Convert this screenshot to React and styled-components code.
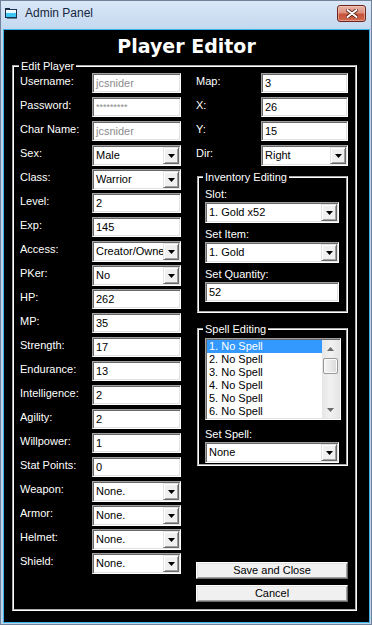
import React from "react";
import styled, { createGlobalStyle } from "styled-components";

const Global = createGlobalStyle`
  html, body { margin: 0; padding: 0; background: #ffffff; }
  body { font-family: "Liberation Sans", Arial, sans-serif; }
  * { box-sizing: border-box; }
`;

const Window = styled.div`
  width: 372px;
  height: 625px;
  display: flex;
  flex-direction: column;
  border: 1px solid #71839a;
  background: linear-gradient(to bottom, #dae7f6 0px, #c3d8ef 28px, #bcd3eb 60px, #bcd3eb 100%);
`;

const TitleBar = styled.div`
  height: 28px;
  display: flex;
  align-items: flex-start;
  padding: 4px 5px 0 4px;
`;

const TitleIcon = styled.svg`
  margin-top: 3px;
  flex: none;
`;

const TitleText = styled.div`
  margin: 1px 0 0 8px;
  font-family: "Liberation Sans", Arial, sans-serif;
  font-size: 12px;
  line-height: 14px;
  color: #15273f;
`;

const CloseButton = styled.div`
  margin-left: auto;
  width: 29px;
  height: 17px;
  border: 1px solid #6e2419;
  border-radius: 3px;
  background: linear-gradient(to bottom, #eab5a7 0%, #dc8f7c 45%, #c6523b 55%, #d0694f 100%);
  box-shadow: inset 0 0 0 1px rgba(255, 220, 210, 0.45);
  display: flex;
  align-items: center;
  justify-content: center;
`;

const Client = styled.div`
  flex: 1;
  margin: 0 1px 1px 2px;
  border: 1px solid #3db2ea;
  background: #000;
  display: flex;
  flex-direction: column;
  padding-top: 5px;
`;

const Heading = styled.div`
  font-family: "DejaVu Sans", Verdana, sans-serif;
  font-weight: bold;
  font-size: 19px;
  line-height: 22px;
  color: #fff;
  text-align: center;
`;

const GroupBox = styled.fieldset`
  border: 2px groove #ffffff;
  margin: ${(p) => p.$margin};
  padding: 0;
  min-width: 0;
`;

const Legend = styled.legend`
  color: #fff;
  font-size: 11px;
  line-height: 14px;
  padding: 0 2px;
  margin-left: ${(p) => p.$indent}px;
`;

const EditorBody = styled.div`
  display: grid;
  grid-template-columns: 161px 152px;
  column-gap: 15px;
  align-items: start;
  padding: 0 6px 7px 6px;
`;

const Column = styled.div`
  display: flex;
  flex-direction: column;
`;

const Row = styled.div`
  display: grid;
  grid-template-columns: ${(p) => p.$label}px ${(p) => p.$field}px;
  height: 24px;
  align-items: start;
`;

const Label = styled.div`
  color: #fff;
  font-size: 11px;
  line-height: 13px;
  padding-top: 2px;
  white-space: nowrap;
`;

const StackLabel = styled.div`
  color: #fff;
  font-size: 11px;
  line-height: 13px;
  margin-top: ${(p) => p.$mt || 0}px;
  white-space: nowrap;
`;

const sunken = `
  border: 1px solid;
  border-color: #a0a0a0 #ffffff #ffffff #a0a0a0;
  box-shadow: inset 1px 1px 0 #696969, inset -1px -1px 0 #e3e3e3;
  background: #fff;
`;

const TextBox = styled.div`
  ${sunken}
  height: 20px;
  width: ${(p) => (p.$w ? `${p.$w}px` : "auto")};
  margin-top: ${(p) => p.$mt || 0}px;
  padding: 0 3px;
  font-size: ${(p) => (p.$secret ? "9px" : "11px")};
  line-height: 18px;
  color: ${(p) => (p.$disabled ? "#8c8c8c" : "#000")};
  white-space: nowrap;
  overflow: hidden;
`;

const Combo = styled.div`
  ${sunken}
  height: 21px;
  width: ${(p) => (p.$w ? `${p.$w}px` : "auto")};
  margin-top: ${(p) => p.$mt || 0}px;
  padding: 1px;
  display: flex;
`;

const ComboText = styled.div`
  flex: 1;
  min-width: 0;
  padding-left: 2px;
  font-size: 11px;
  line-height: 17px;
  color: #000;
  white-space: nowrap;
  overflow: hidden;
`;

const DropButton = styled.div`
  flex: none;
  width: 16px;
  height: 17px;
  background: #f0f0f0;
  border: 1px solid;
  border-color: #e3e3e3 #696969 #696969 #e3e3e3;
  box-shadow: inset 1px 1px 0 #ffffff, inset -1px -1px 0 #a0a0a0;
  display: flex;
  align-items: center;
  justify-content: center;
`;

const SubBody = styled.div`
  display: flex;
  flex-direction: column;
  padding: ${(p) => p.$pad};
`;

const ListBox = styled.div`
  ${sunken}
  width: 136px;
  height: 82px;
  padding: 1px;
  display: flex;
`;

const ListItems = styled.div`
  flex: 1;
  min-width: 0;
  display: flex;
  flex-direction: column;
`;

const ListItem = styled.div`
  height: 13px;
  font-size: 11px;
  line-height: 13px;
  padding-left: 2px;
  white-space: nowrap;
  color: ${(p) => (p.$selected ? "#fff" : "#000")};
  background: ${(p) => (p.$selected ? "#3399ff" : "transparent")};
`;

const ScrollBar = styled.div`
  flex: none;
  width: 17px;
  background: linear-gradient(to right, #e6e6e6, #f1f1f1 50%, #e6e6e6);
  display: flex;
  flex-direction: column;
`;

const ScrollArrow = styled.div`
  height: 17px;
  display: flex;
  align-items: center;
  justify-content: center;
`;

const ScrollTrack = styled.div`
  flex: 1;
  display: flex;
  flex-direction: column;
  align-items: center;
`;

const ScrollThumb = styled.div`
  margin-top: 1px;
  width: 15px;
  height: 16px;
  border: 1px solid #979797;
  border-radius: 2px;
  background: linear-gradient(to right, #f4f4f4, #e8e8e8 50%, #d9d9d9);
  box-shadow: inset 0 0 0 1px #fbfbfb;
`;

const PushButton = styled.div`
  height: 17px;
  margin-top: ${(p) => p.$mt}px;
  border: 1px solid;
  border-color: #ffffff #696969 #696969 #ffffff;
  box-shadow: inset 1px 1px 0 #e3e3e3, inset -1px -1px 0 #a0a0a0;
  background: #f0f0f0;
  font-size: 11px;
  line-height: 15px;
  text-align: center;
  color: #000;
`;

const Arrow = () => (
  <svg width="7" height="4" viewBox="0 0 7 4">
    <polygon points="0,0 7,0 3.5,4" fill="#000" />
  </svg>
);

const ScrollGlyph = ({ up }) => (
  <svg width="7" height="4" viewBox="0 0 7 4">
    <polygon points={up ? "0,4 7,4 3.5,0" : "0,0 7,0 3.5,4"} fill="#6a6a6a" />
  </svg>
);

const ComboField = ({ value, w, mt }) => (
  <Combo $w={w} $mt={mt}>
    <ComboText>{value}</ComboText>
    <DropButton>
      <Arrow />
    </DropButton>
  </Combo>
);

const leftRows = [
  ["Username:", "text", "jcsnider", true],
  ["Password:", "secret", "*********", true],
  ["Char Name:", "text", "jcsnider", true],
  ["Sex:", "combo", "Male"],
  ["Class:", "combo", "Warrior"],
  ["Level:", "text", "2"],
  ["Exp:", "text", "145"],
  ["Access:", "combo", "Creator/Owner"],
  ["PKer:", "combo", "No"],
  ["HP:", "text", "262"],
  ["MP:", "text", "35"],
  ["Strength:", "text", "17"],
  ["Endurance:", "text", "13"],
  ["Intelligence:", "text", "2"],
  ["Agility:", "text", "2"],
  ["Willpower:", "text", "1"],
  ["Stat Points:", "text", "0"],
  ["Weapon:", "combo", "None."],
  ["Armor:", "combo", "None."],
  ["Helmet:", "combo", "None."],
  ["Shield:", "combo", "None."],
];

const rightRows = [
  ["Map:", "text", "3"],
  ["X:", "text", "26"],
  ["Y:", "text", "15"],
  ["Dir:", "combo", "Right"],
];

const renderField = (kind, value, disabled) =>
  kind === "combo" ? (
    <ComboField value={value} />
  ) : (
    <TextBox $disabled={disabled} $secret={kind === "secret"}>
      {value}
    </TextBox>
  );

const spells = [1, 2, 3, 4, 5, 6].map((n) => `${n}. No Spell`);

export default function App() {
  return (
    <>
      <Global />
      <Window>
        <TitleBar>
          <TitleIcon width="12" height="11" viewBox="0 0 12 11">
            <rect x="0" y="0" width="5" height="2" fill="#1d2f48" />
            <rect x="0.5" y="1.5" width="11" height="8" fill="#eafaff" stroke="#1d2f48" />
            <rect x="1" y="5" width="10" height="4" fill="#3cc6f2" />
            <rect x="1" y="2" width="10" height="1" fill="#ffffff" />
            <rect x="2" y="10" width="10" height="1" fill="#6d7f95" />
          </TitleIcon>
          <TitleText>Admin Panel</TitleText>
          <CloseButton>
            <svg width="12" height="9" viewBox="0 0 12 9">
              <path d="M1.5 1 L10.5 8 M10.5 1 L1.5 8" stroke="#5a1b12" strokeWidth="3.6" strokeLinecap="round" />
              <path d="M1.5 1 L10.5 8 M10.5 1 L1.5 8" stroke="#ffffff" strokeWidth="2" strokeLinecap="round" />
            </svg>
          </CloseButton>
        </TitleBar>
        <Client>
          <Heading>Player Editor</Heading>
          <GroupBox $margin="2px 12px 0 8px">
            <Legend $indent={5}>Edit Player</Legend>
            <EditorBody>
              <Column>
                {leftRows.map(([label, kind, value, disabled]) => (
                  <Row key={label} $label={72} $field={89}>
                    <Label>{label}</Label>
                    {renderField(kind, value, disabled)}
                  </Row>
                ))}
              </Column>
              <Column>
                {rightRows.map(([label, kind, value]) => (
                  <Row key={label} $label={65} $field={87}>
                    <Label>{label}</Label>
                    {renderField(kind, value, false)}
                  </Row>
                ))}
                <GroupBox $margin="1px 0 0 1px">
                  <Legend $indent={4}>Inventory Editing</Legend>
                  <SubBody $pad="4px 7px 9px 6px">
                    <StackLabel>Slot:</StackLabel>
                    <ComboField value="1. Gold x52" mt={1} />
                    <StackLabel $mt={5}>Set Item:</StackLabel>
                    <ComboField value="1. Gold" mt={1} />
                    <StackLabel $mt={5}>Set Quantity:</StackLabel>
                    <TextBox $mt={1}>52</TextBox>
                  </SubBody>
                </GroupBox>
                <GroupBox $margin="9px 0 0 1px">
                  <Legend $indent={4}>Spell Editing</Legend>
                  <SubBody $pad="2px 7px 1px 6px">
                    <ListBox>
                      <ListItems>
                        {spells.map((s, i) => (
                          <ListItem key={s} $selected={i === 0}>
                            {s}
                          </ListItem>
                        ))}
                      </ListItems>
                      <ScrollBar>
                        <ScrollArrow>
                          <ScrollGlyph up />
                        </ScrollArrow>
                        <ScrollTrack>
                          <ScrollThumb />
                        </ScrollTrack>
                        <ScrollArrow>
                          <ScrollGlyph />
                        </ScrollArrow>
                      </ScrollBar>
                    </ListBox>
                    <StackLabel $mt={8}>Set Spell:</StackLabel>
                    <ComboField value="None" mt={1} />
                  </SubBody>
                </GroupBox>
                <PushButton $mt={96}>Save and Close</PushButton>
                <PushButton $mt={6}>Cancel</PushButton>
              </Column>
            </EditorBody>
          </GroupBox>
        </Client>
      </Window>
    </>
  );
}
